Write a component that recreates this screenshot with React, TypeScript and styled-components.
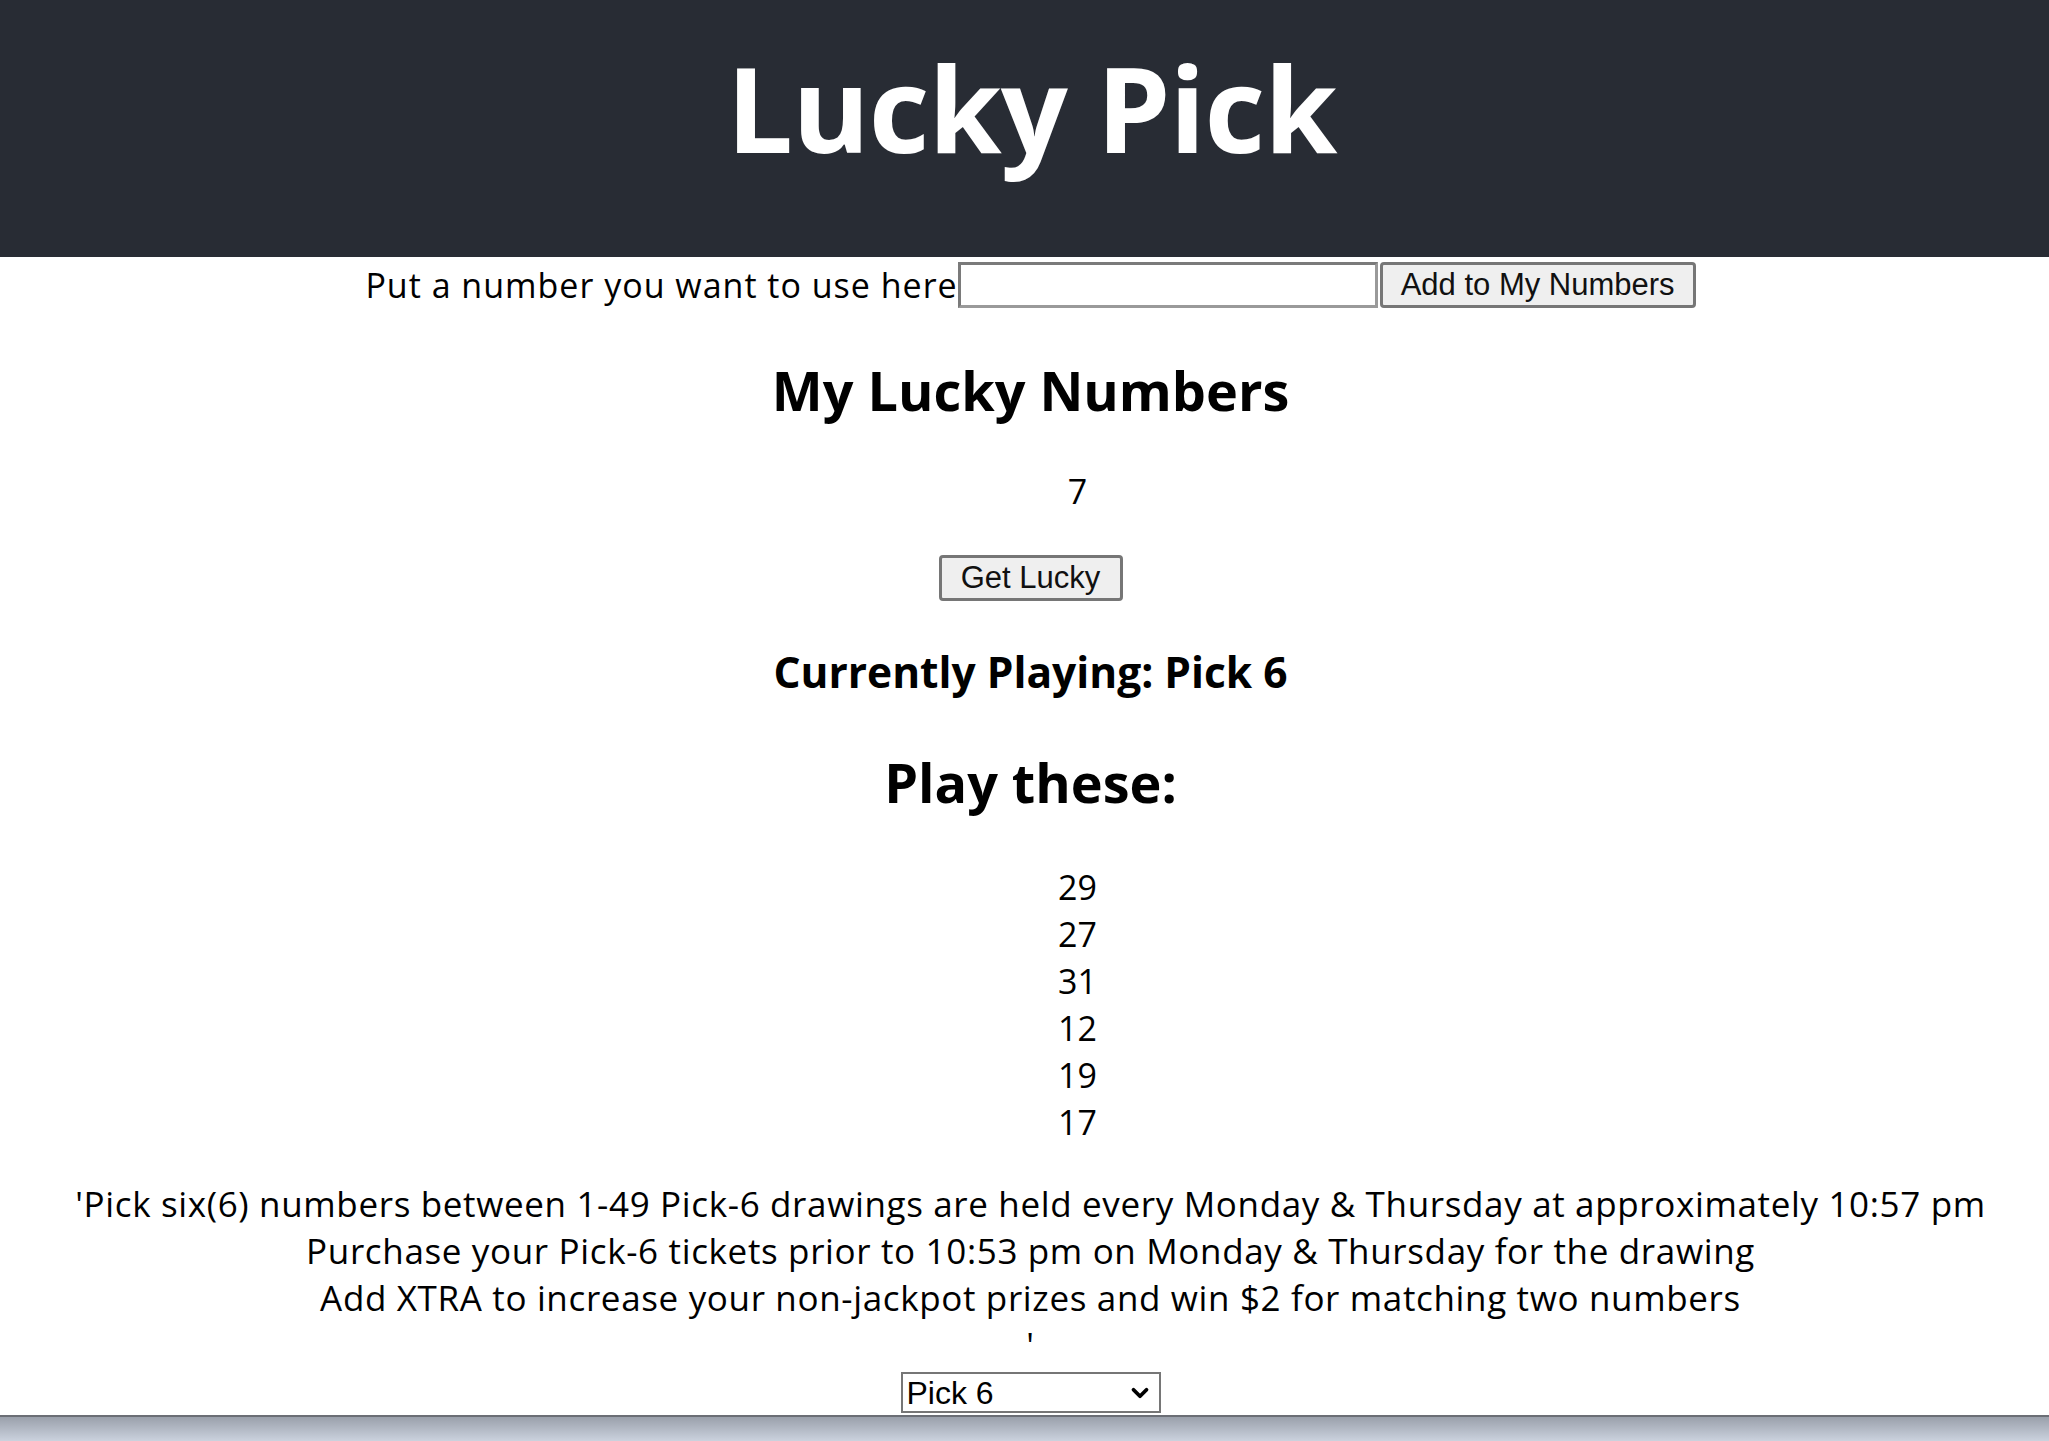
import React, { useState } from 'react';
import styled, { createGlobalStyle } from 'styled-components';
import { ChevronDown } from 'lucide-react';

const GlobalStyle = createGlobalStyle`
  html, body {
    margin: 0;
    padding: 0;
    background: #ffffff;
  }
  body {
    font-family: 'Open Sans', 'Noto Sans', sans-serif;
    color: #000000;
  }
`;

const games = ['Pick 6', 'Pick 4', 'Pick 3', 'Mega Millions', 'Powerball'];

function App() {
  const [myNumbers] = useState<number[]>([7]);
  const [picks] = useState<number[]>([29, 27, 31, 12, 19, 17]);
  const [game, setGame] = useState<string>('Pick 6');
  const [entry, setEntry] = useState<string>('');

  return (
    <>
      <GlobalStyle />
      <Header>
        <Title>Lucky Pick</Title>
      </Header>
      <Main>
        <EntryRow>
          <EntryLabel>Put a number you want to use here</EntryLabel>
          <EntryInput value={entry} onChange={(e) => setEntry(e.target.value)} />
          <PlainButton>Add to My Numbers</PlainButton>
        </EntryRow>
        <SectionTitle $top={44}>My Lucky Numbers</SectionTitle>
        <NumberList $top={40}>
          {myNumbers.map((n) => (
            <li key={n}>{n}</li>
          ))}
        </NumberList>
        <LuckyButton>Get Lucky</LuckyButton>
        <GameTitle>Currently Playing: {game}</GameTitle>
        <SectionTitle $top={45}>Play these:</SectionTitle>
        <NumberList $top={44}>
          {picks.map((n) => (
            <li key={n}>{n}</li>
          ))}
        </NumberList>
        <Rules>
          {"'Pick six(6) numbers between 1-49 Pick-6 drawings are held every Monday & Thursday at approximately 10:57 pm\nPurchase your Pick-6 tickets prior to 10:53 pm on Monday & Thursday for the drawing\nAdd XTRA to increase your non-jackpot prizes and win $2 for matching two numbers\n'"}
        </Rules>
        <SelectWrap>
          <GameSelect value={game} onChange={(e) => setGame(e.target.value)}>
            {games.map((g) => (
              <option key={g} value={g}>
                {g}
              </option>
            ))}
          </GameSelect>
          <SelectArrow>
            <ChevronDown size={26} strokeWidth={3.5} color="#000000" />
          </SelectArrow>
        </SelectWrap>
      </Main>
      <BottomBar />
    </>
  );
}

const Header = styled.header`
  box-sizing: border-box;
  height: 257px;
  padding: 49px 0 0 14px;
  background: #282c34;
  text-align: center;
`;

const Title = styled.h1`
  margin: 0;
  font-size: 118px;
  line-height: 1;
  font-weight: 700;
  color: #ffffff;
  letter-spacing: -1px;
`;

const Main = styled.main`
  display: flex;
  flex-direction: column;
  align-items: center;
  text-align: center;
  padding: 0 0 40px 12px;
`;

const EntryRow = styled.div`
  display: flex;
  align-items: center;
  justify-content: center;
  margin-top: 5px;
  height: 46px;
`;

const EntryLabel = styled.span`
  font-size: 34px;
  line-height: 46px;
  letter-spacing: 1px;
`;

const EntryInput = styled.input`
  box-sizing: border-box;
  width: 420px;
  height: 46px;
  margin: 0 2px 0 0;
  border: 3px solid #7a7a7a;
  border-right-color: #9a9a9a;
  border-bottom-color: #9a9a9a;
  font-size: 30px;
  padding: 0 6px;
  background: #ffffff;
`;

const PlainButton = styled.button`
  box-sizing: border-box;
  height: 46px;
  padding: 0 18px;
  border: 3px solid #767676;
  border-radius: 4px;
  background: #efefef;
  font-family: 'Liberation Sans', Arial, sans-serif;
  font-size: 31px;
  color: #111111;
  cursor: pointer;
`;

const SectionTitle = styled.h2<{ $top: number }>`
  margin: ${(p) => p.$top}px 0 0;
  font-size: 54px;
  line-height: 76px;
  font-weight: 700;
  letter-spacing: 0;
`;

const NumberList = styled.ul<{ $top: number }>`
  list-style: none;
  margin: ${(p) => p.$top}px 0 0;
  padding: 0 0 0 94px;
  font-size: 34px;
  line-height: 47px;
`;

const LuckyButton = styled(PlainButton)`
  width: 184px;
  height: 46px;
  margin-top: 40px;
  padding: 0;
`;

const GameTitle = styled.h3`
  margin: 44px 0 0;
  font-size: 42.5px;
  line-height: 54px;
  font-weight: 700;
  letter-spacing: 0;
`;

const Rules = styled.p`
  margin: 34px 0 0;
  white-space: pre-line;
  font-size: 35px;
  line-height: 47px;
  letter-spacing: 0.65px;
`;

const SelectWrap = styled.div`
  position: relative;
  margin-top: 4px;
`;

const GameSelect = styled.select`
  box-sizing: border-box;
  display: block;
  width: 260px;
  height: 41px;
  border: 2px solid #767676;
  border-radius: 0;
  padding: 0 4px;
  background: #ffffff;
  appearance: none;
  font-family: 'Liberation Sans', Arial, sans-serif;
  font-size: 32px;
  color: #000000;
`;

const SelectArrow = styled.span`
  position: absolute;
  right: 8px;
  top: 8px;
  display: flex;
  pointer-events: none;
`;

const BottomBar = styled.div`
  position: fixed;
  left: 0;
  right: 0;
  bottom: 0;
  height: 24px;
  border-top: 2px solid #6b6e75;
  background: linear-gradient(#9aa0ab, #cbd2de);
`;

export default App;
